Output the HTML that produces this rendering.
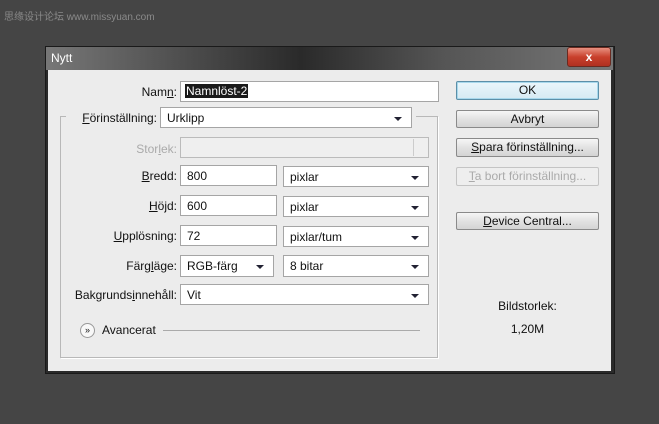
<!DOCTYPE html>
<html><head><style>
body{margin:0;width:659px;height:424px;background:#454545;position:relative;overflow:hidden;font-family:"Liberation Sans",sans-serif;font-size:12px;color:#111}
.a{position:absolute}
.dlg{left:45px;top:46px;width:568px;height:326px;background:#2a2a2a;border:1px solid #1a1a1a}
.title{left:46px;top:47px;width:567px;height:23px;background:linear-gradient(90deg,#777 0%,#555 20%,#2a2a2a 45%,#555 70%,#777 100%)}
.content{left:48px;top:70px;width:563px;height:301px;background:#ececec}
.lbl{text-align:right;font-size:12px}
.in{background:#fff;border:1px solid #a5a5a5;box-sizing:border-box;padding:3px 6px;font-size:12px}
.sel::after{content:"";position:absolute;right:9px;top:9px;border-left:4px solid transparent;border-right:4px solid transparent;border-top:4px solid #223}
.btn{left:456px;width:143px;box-sizing:border-box;border:1px solid #8a8a8a;border-radius:2px;background:linear-gradient(#f6f6f6,#e2e2e2 50%,#d4d4d4);text-align:center;font-size:12px;line-height:17px}
u{text-decoration:underline}
</style></head><body>
<div class="a" style="left:4px;top:8px;color:#8a8a8a;font-size:10px;font-family:'Liberation Sans','Noto Sans CJK SC',sans-serif">思缘设计论坛 www.missyuan.com</div>
<div class="a dlg"></div>
<div class="a title"></div>
<div class="a" style="left:51px;top:51px;color:#fff;font-size:12px">Nytt</div>
<div class="a" style="left:567px;top:47px;width:42px;height:18px;border-radius:3px;background:linear-gradient(#e89080,#c8402c 50%,#b03020);border:1px solid #6a2a20;color:#fff;text-align:center;font-weight:bold;font-size:12px;line-height:18px">x</div>
<div class="a content"></div>

<div class="a lbl" style="left:100px;top:85px;width:77px">Nam<u>n</u>:</div>
<div class="a in" style="left:180px;top:81px;width:259px;height:21px;padding:2px 4px"><span style="background:#1a1a1a;color:#fff;padding:0 1px">Namnlöst-2</span></div>

<div class="a" style="left:60px;top:116px;width:376px;height:240px;border:1px solid #b8b8b8;box-shadow:1px 1px 0 #fff"></div>
<div class="a" style="left:66px;top:106px;width:350px;height:24px;background:#ececec"></div>
<div class="a lbl" style="left:60px;top:111px;width:97px"><u>F</u>örinställning:</div>
<div class="a in sel" style="left:160px;top:107px;width:252px;height:21px">Urklipp</div>

<div class="a lbl" style="left:80px;top:142px;width:97px;color:#aaa">Stor<u>l</u>ek:</div>
<div class="a" style="left:180px;top:137px;width:249px;height:21px;border:1px solid #bbb;box-sizing:border-box;background:#efefef"></div>
<div class="a" style="left:413px;top:139px;width:14px;height:17px;border-left:1px solid #ccc"></div>

<div class="a lbl" style="left:80px;top:169px;width:97px"><u>B</u>redd:</div>
<div class="a in" style="left:180px;top:165px;width:97px;height:21px">800</div>
<div class="a in sel" style="left:283px;top:166px;width:146px;height:21px">pixlar</div>

<div class="a lbl" style="left:80px;top:199px;width:97px"><u>H</u>öjd:</div>
<div class="a in" style="left:180px;top:195px;width:97px;height:21px">600</div>
<div class="a in sel" style="left:283px;top:196px;width:146px;height:21px">pixlar</div>

<div class="a lbl" style="left:60px;top:229px;width:117px"><u>U</u>pplösning:</div>
<div class="a in" style="left:180px;top:225px;width:97px;height:21px">72</div>
<div class="a in sel" style="left:283px;top:226px;width:146px;height:21px">pixlar/tum</div>

<div class="a lbl" style="left:60px;top:259px;width:117px">Färg<u>l</u>äge:</div>
<div class="a in sel" style="left:180px;top:255px;width:94px;height:22px">RGB-färg</div>
<div class="a in sel" style="left:283px;top:255px;width:146px;height:22px">8 bitar</div>

<div class="a lbl" style="left:60px;top:288px;width:117px">Bakgrunds<u>i</u>nnehåll:</div>
<div class="a in sel" style="left:180px;top:284px;width:249px;height:21px">Vit</div>

<div class="a" style="left:80px;top:323px;width:13px;height:13px;border-radius:50%;border:1px solid #999;background:#f8f8f8;font-size:9px;text-align:center;line-height:13px">»</div>
<div class="a" style="left:102px;top:323px">Avancerat</div>
<div class="a" style="left:163px;top:330px;width:257px;height:1px;background:#aaa"></div>

<div class="a btn" style="top:81px;height:19px;border-color:#5c8fa8;box-shadow:inset 0 0 0 1px #a8d8ec;background:linear-gradient(#eaf6fb,#d6eaf3)">OK</div>
<div class="a btn" style="top:110px;height:18px">Avbryt</div>
<div class="a btn" style="top:138px;height:19px"><u>S</u>para förinställning...</div>
<div class="a btn" style="top:167px;height:19px;color:#aaa;border-color:#c4c4c4;background:#eee"><u>T</u>a bort förinställning...</div>
<div class="a btn" style="top:212px;height:18px"><u>D</u>evice Central...</div>

<div class="a" style="left:456px;top:299px;width:143px;text-align:center">Bildstorlek:</div>
<div class="a" style="left:456px;top:322px;width:143px;text-align:center">1,20M</div>
</body></html>
